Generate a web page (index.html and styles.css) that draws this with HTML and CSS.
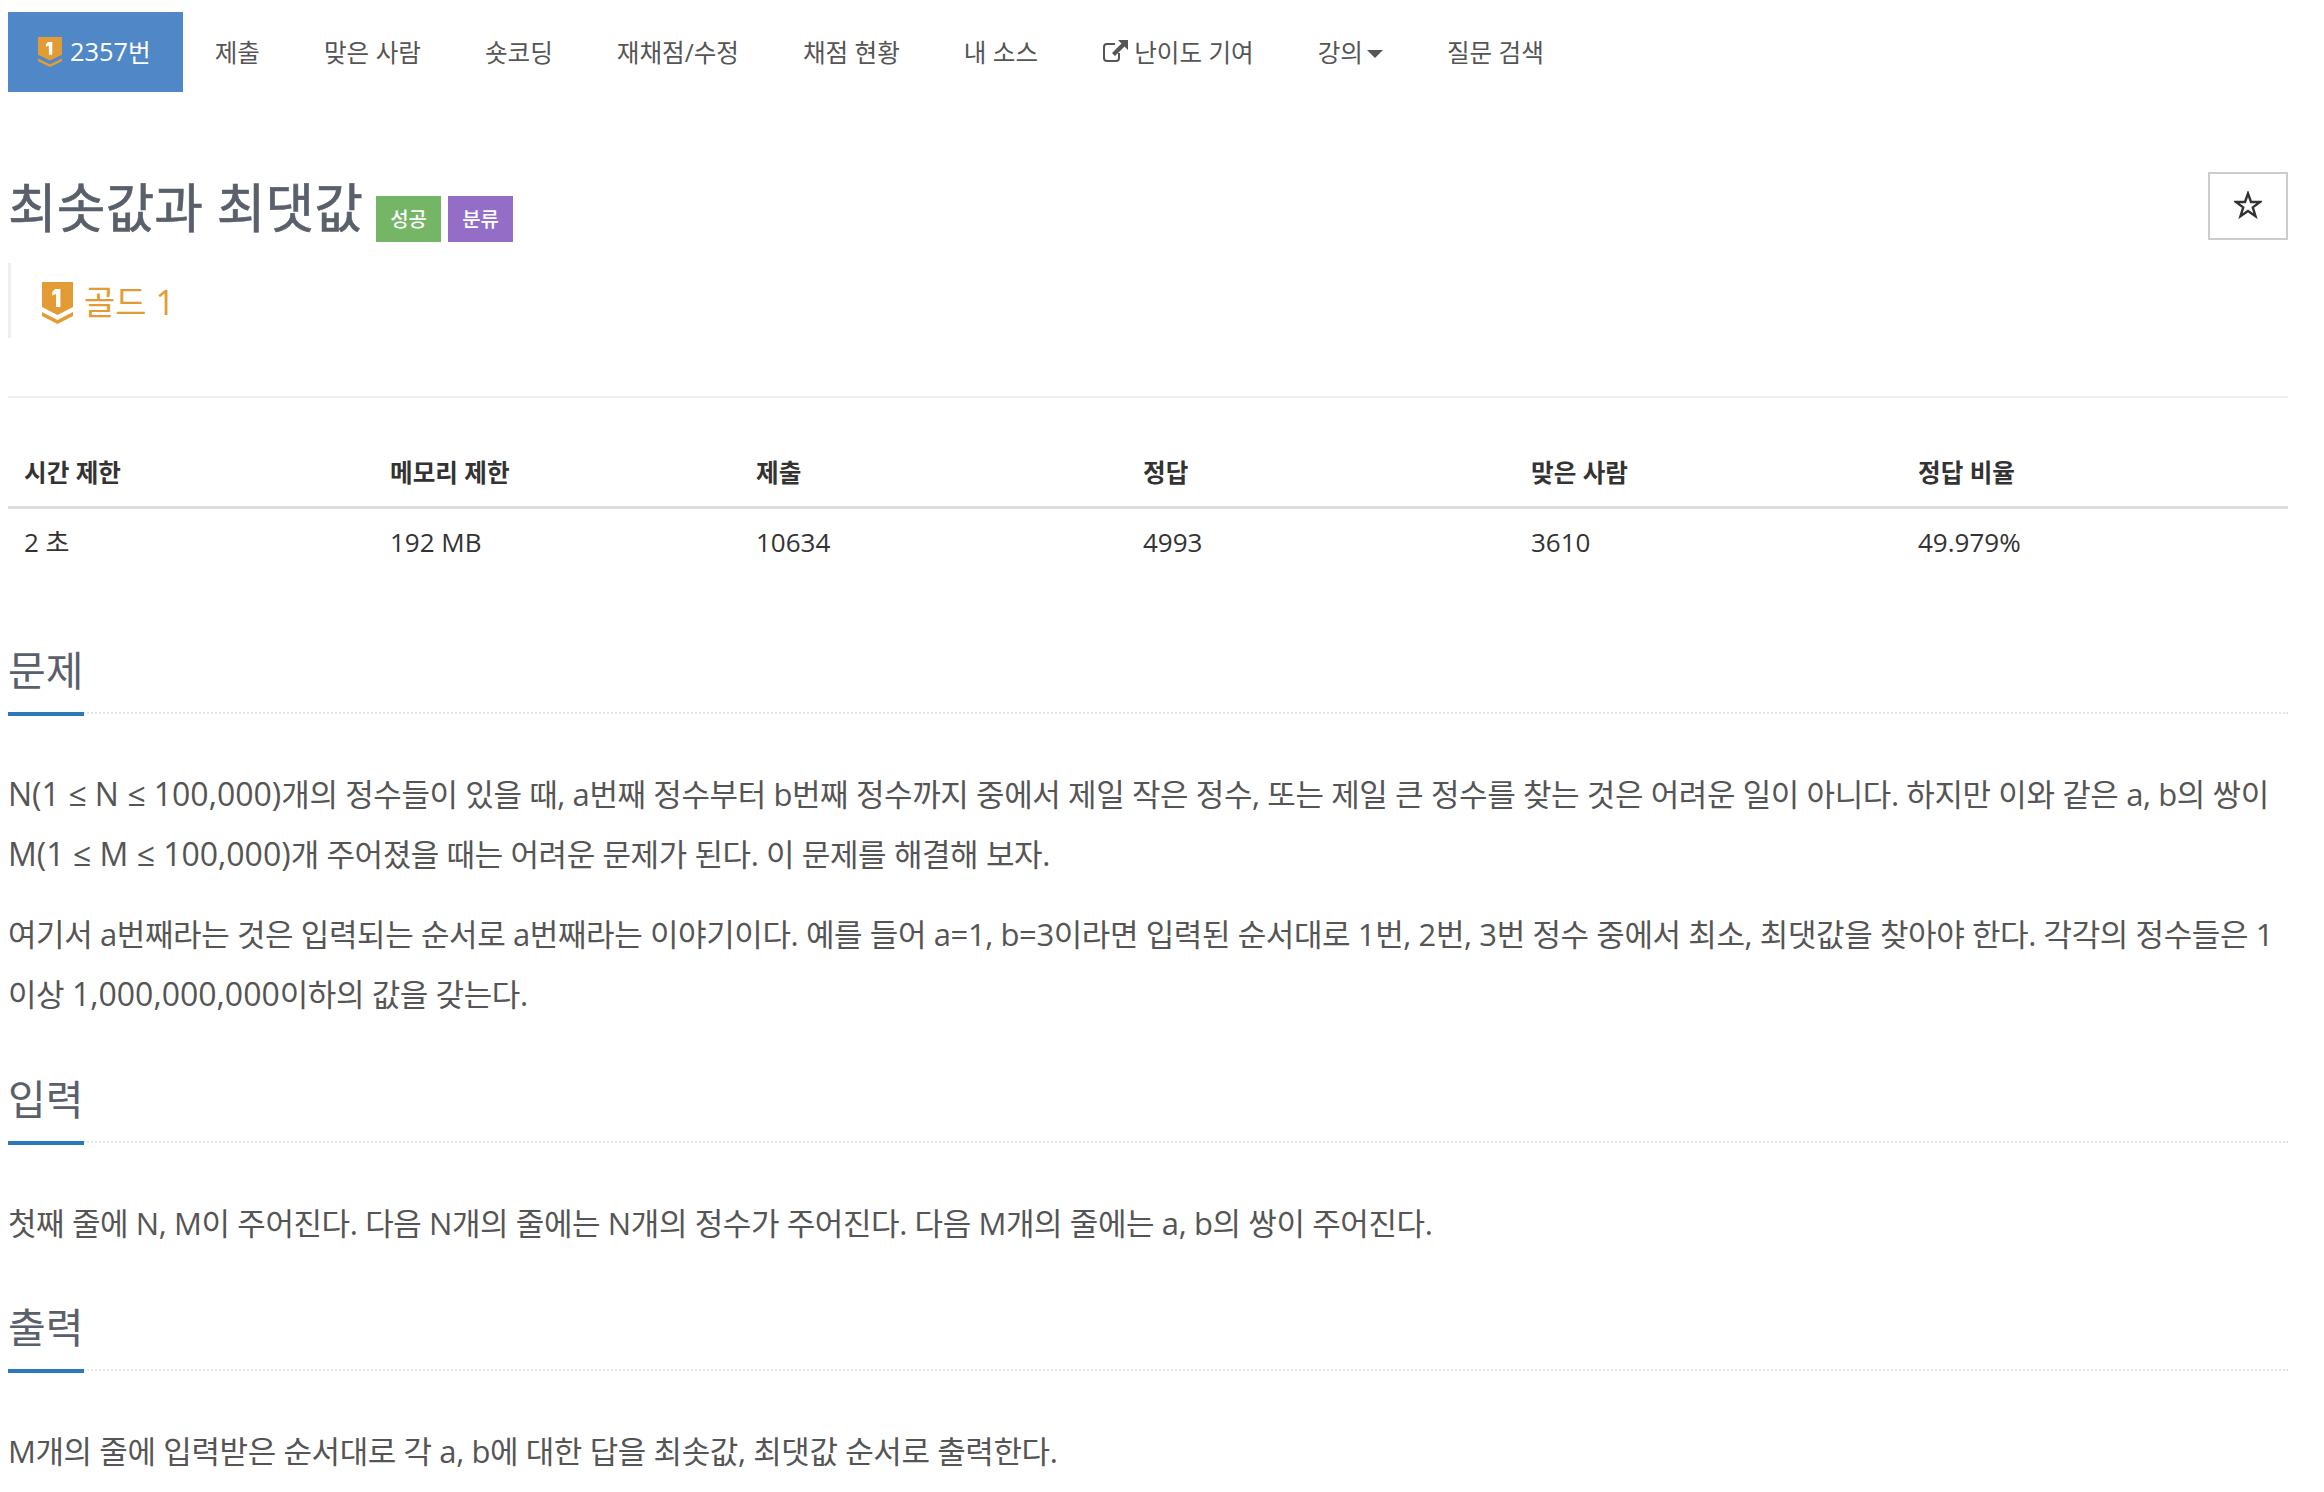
FILE: index.html
```html
<!DOCTYPE html>
<html lang="ko">
<head>
<meta charset="utf-8">
<title>최솟값과 최댓값</title>
<link rel="stylesheet" href="styles.css">
</head>
<body>
<svg class="defs" width="0" height="0" aria-hidden="true">
  <symbol id="tier" viewBox="0 0 32 42" preserveAspectRatio="none">
    <path d="M0 0H32V25L16 33L0 25Z" fill="#e39c35"/>
    <path d="M0 30L16 38L32 30V34L16 42L0 34Z" fill="#e39c35"/>
    <path d="M13.5 7H19V25H14.5V12L10.5 13.5V10Z" fill="#fff"/>
  </symbol>
</svg>
<nav class="nav">
  <a class="nav-item active"><svg class="tier-small"><use href="#tier"/></svg><span class="num-tab">2357</span>번</a>
  <a class="nav-item">제출</a>
  <a class="nav-item">맞은 사람</a>
  <a class="nav-item">숏코딩</a>
  <a class="nav-item">재채점/수정</a>
  <a class="nav-item">채점 현황</a>
  <a class="nav-item">내 소스</a>
  <a class="nav-item"><svg class="ext" viewBox="0 0 26 24"><path d="M17 14v5a3 3 0 0 1-3 3H5a3 3 0 0 1-3-3V8a3 3 0 0 1 3-3h8" fill="none" stroke="#555" stroke-width="2"/><path d="M16 1H26V11L22.5 7.5L13 17L10 14L19.5 4.5Z" fill="#555"/></svg>난이도 기여</a>
  <a class="nav-item">강의<span class="caret"></span></a>
  <a class="nav-item">질문 검색</a>
</nav>
<header class="title-row">
  <h1 class="title">최솟값과 최댓값</h1>
  <span class="label success">성공</span>
  <span class="label purple">분류</span>
  <button class="star" type="button"><svg viewBox="0 0 28 28" class="star-icon"><path d="M14 2.5L17 11H26L18.8 16.4L21.5 25.2L14 20L6.5 25.2L9.2 16.4L2 11H11Z" fill="none" stroke="#333" stroke-width="2.4"/></svg></button>
</header>
<blockquote class="tier-quote"><svg class="tier-large"><use href="#tier"/></svg>골드 1</blockquote>
<hr class="rule">
<section class="stats">
  <div class="th">시간 제한</div><div class="th">메모리 제한</div><div class="th">제출</div><div class="th">정답</div><div class="th">맞은 사람</div><div class="th">정답 비율</div>
  <div class="td">2 초</div><div class="td">192 MB</div><div class="td">10634</div><div class="td">4993</div><div class="td">3610</div><div class="td">49.979%</div>
</section>
<section class="problem first">
  <h2 class="headline"><span>문제</span></h2>
  <p><span class="num">N(1 ≤ N ≤ 100,000)</span>개의 정수들이 있을 때, a번째 정수부터 b번째 정수까지 중에서 제일 작은 정수, 또는 제일 큰 정수를 찾는 것은 어려운 일이 아니다. 하지만 이와 같은 a, b의 쌍이 <span class="num">M(1 ≤ M ≤ 100,000)</span>개 주어졌을 때는 어려운 문제가 된다. 이 문제를 해결해 보자.</p>
  <p>여기서 a번째라는 것은 입력되는 순서로 a번째라는 이야기이다. 예를 들어 a=1, b=3이라면 입력된 순서대로 1번, 2번, 3번 정수 중에서 최소, 최댓값을 찾아야 한다. 각각의 정수들은 1이상 <span class="num">1,000,000,000</span>이하의 값을 갖는다.</p>
</section>
<section class="problem">
  <h2 class="headline"><span>입력</span></h2>
  <p>첫째 줄에 N, M이 주어진다. 다음 N개의 줄에는 N개의 정수가 주어진다. 다음 M개의 줄에는 a, b의 쌍이 주어진다.</p>
</section>
<section class="problem">
  <h2 class="headline"><span>출력</span></h2>
  <p>M개의 줄에 입력받은 순서대로 각 a, b에 대한 답을 최솟값, 최댓값 순서로 출력한다.</p>
</section>
</body>
</html>
```

FILE: styles.css
```css
html, body { margin: 0; padding: 0; background: #fff; }
body {
  box-sizing: border-box;
  width: 2324px;
  height: 1492px;
  padding: 12px 36px 0 8px;
  overflow: hidden;
  font-family: "Open Sans", "Noto Sans CJK KR", sans-serif;
  font-size: 24px;
  color: #333;
}
.defs { position: absolute; }
.nav { display: flex; height: 80px; }
.nav-item {
  display: flex;
  align-items: center;
  padding: 0 32px 3px;
  color: #555;
  font-size: 24.6px;
  white-space: nowrap;
}
.nav-item.active { background: #5087c7; color: #fff; padding: 0 32px 3px 30px; }
.num-tab { font-size: 25.4px; }
.tier-small { width: 24px; height: 30px; margin: 3px 8px 0 0; }
.ext { width: 26px; height: 24px; margin-right: 6px; }
.caret {
  width: 0; height: 0; margin: 7px 0 0 4px;
  border-left: 8px solid transparent;
  border-right: 8px solid transparent;
  border-top: 8px solid #555;
}
.title-row {
  display: flex;
  align-items: flex-start;
  margin-top: 82px;
  height: 89px;
}
.title { margin: 4px 0 0; font-size: 53px; line-height: 60px; font-weight: 400; color: #5a606b; -webkit-text-stroke: 0.6px #5a606b; }
.label {
  margin: 22px 0 0 0;
  height: 46px; line-height: 48px;
  width: 65px;
  text-align: center;
  color: #fff;
  font-size: 20px;
  font-weight: 500;
}
.success { margin-left: 13px; background: #74b566; }
.purple { margin-left: 7px; background: #946ec6; }
.star {
  margin: -2px 0 0 auto;
  width: 80px; height: 68px;
  padding: 0 0 2px;
  display: flex; align-items: center; justify-content: center;
  background: #fff;
  border: 2px solid #ccc;
}
.star-icon { width: 28px; height: 28px; }
.tier-quote {
  display: flex;
  align-items: center;
  margin: 0;
  height: 75px;
  padding-left: 31px;
  border-left: 3px solid #eee;
  color: #e39c35;
  font-size: 34px;
  box-sizing: border-box;
}
.tier-large { width: 31px; height: 42px; margin: 4px 11px 0 0; }
.rule { margin: 58px 0 0; border: 0; border-top: 2px solid #eee; }
.stats {
  display: grid;
  grid-template-columns: 366px 366px 387px 388px 387px 1fr;
  margin-top: 53px;
}
.th, .td { padding: 0 16px; line-height: 36px; }
.th { font-weight: 700; height: 51px; padding-top: 4px; border-bottom: 3px solid #ddd; color: #333; font-size: 24.6px; }
.td { padding-top: 15px; color: #333; font-size: 26px; }
.problem { margin-top: 51.5px; }
.problem.first { margin-top: 87px; }
.headline {
  margin: 0;
  height: 65px;
  font-size: 41px;
  line-height: 46px;
  font-weight: 400;
  color: #5a606b;
  border-bottom: 2px dotted #e4e4e4;
}
.headline span {
  display: inline-block;
  height: 65px;
  border-bottom: 4px solid #2d77bb;
  padding-right: 1px;
}
.problem p {
  margin: 0;
  font-size: 31px;
  letter-spacing: -0.4px;
  line-height: 60px;
  color: #555;
}
.problem .num { font-size: 32px; letter-spacing: 0; }
.headline + p { margin-top: 50px; }
.problem p + p { margin-top: 20px; }
```
